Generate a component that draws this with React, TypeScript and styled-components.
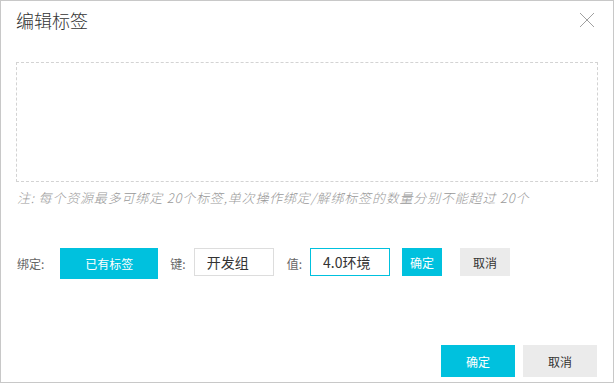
import React from 'react'
import styled, { createGlobalStyle } from 'styled-components'

const GlobalStyle = createGlobalStyle`
  html, body {
    margin: 0;
    padding: 0;
    background: #ffffff;
  }
  body {
    font-family: "Noto Sans CJK SC", "Liberation Sans", sans-serif;
  }
  * {
    box-sizing: border-box;
  }
`

const Dialog = styled.div`
  width: 614px;
  height: 383px;
  border: 1px solid #c8c8c8;
  background: #fff;
  display: flex;
  flex-direction: column;
  color: #333;
`

const Header = styled.div`
  height: 37px;
  padding: 0 15px;
  display: flex;
  align-items: center;
  justify-content: space-between;
`

const Title = styled.h3`
  margin: 0;
  font-size: 18px;
  font-weight: 300;
  color: #333;
  line-height: 24px;
`

const CloseButton = styled.button`
  width: 16px;
  height: 16px;
  margin-right: 3px;
  padding: 0;
  border: 0;
  background: none;
  display: flex;
  align-items: center;
  justify-content: center;
  cursor: pointer;
`

const Body = styled.div`
  padding: 24px 15px 0;
  display: flex;
  flex-direction: column;
`

const TagArea = styled.div`
  height: 120px;
  border: 1px dashed #d3d3d3;
`

const Note = styled.p`
  margin: 7px 0 0 1px;
  font-size: 13px;
  letter-spacing: 0.82px;
  line-height: 17px;
  font-style: italic;
  font-weight: 300;
  color: #999;
`

const BindRow = styled.div`
  margin-top: 42px;
  display: flex;
  align-items: center;
  height: 31px;
`

const Label = styled.span<{ $before?: number; $after: number }>`
  font-size: 12px;
  color: #666;
  margin-left: ${p => p.$before ?? 1}px;
  margin-right: ${p => p.$after}px;
`

const Button = styled.button<{ $primary?: boolean; $w: number; $h: number; $before?: number }>`
  width: ${p => p.$w}px;
  height: ${p => p.$h}px;
  margin-left: ${p => p.$before ?? 0}px;
  border: 0;
  padding: 0;
  font-family: inherit;
  font-size: 12px;
  cursor: pointer;
  background: ${p => (p.$primary ? '#00c1de' : '#ebebeb')};
  color: ${p => (p.$primary ? '#fff' : '#333')};
`

const SmallButton = styled(Button)`
  align-self: flex-start;
`

const Input = styled.input<{ $focused?: boolean }>`
  width: 80px;
  height: 28px;
  padding: 0 12px;
  border: 1px solid ${p => (p.$focused ? '#00c1de' : '#dddddd')};
  outline: none;
  font-family: inherit;
  font-size: 14px;
  color: #333;
  background: #fff;
  align-self: flex-start;
`

const Footer = styled.div`
  margin-top: auto;
  padding: 0 16px 5px;
  display: flex;
  justify-content: flex-end;
  gap: 8px;
`

const CloseIcon = () => (
  <svg width="16" height="16" viewBox="0 0 16 16">
    <path d="M1 1 L15 15 M15 1 L1 15" stroke="#a0a0a0" strokeWidth="1" fill="none" />
  </svg>
)

export default function App() {
  return (
    <>
      <GlobalStyle />
      <Dialog>
        <Header>
          <Title>编辑标签</Title>
          <CloseButton aria-label="关闭">
            <CloseIcon />
          </CloseButton>
        </Header>
        <Body>
          <TagArea />
          <Note>注: 每个资源最多可绑定 20个标签,单次操作绑定/解绑标签的数量分别不能超过 20个</Note>
          <BindRow>
            <Label $after={16}>绑定:</Label>
            <Button $primary $w={98} $h={31}>已有标签</Button>
            <Label $before={12} $after={8}>键:</Label>
            <Input defaultValue="开发组" />
            <Label $before={13} $after={8}>值:</Label>
            <Input $focused defaultValue="4.0环境" />
            <SmallButton $primary $w={40} $h={28} $before={12}>确定</SmallButton>
            <SmallButton $w={50} $h={28} $before={18}>取消</SmallButton>
          </BindRow>
        </Body>
        <Footer>
          <Button $primary $w={74} $h={32}>确定</Button>
          <Button $w={74} $h={32}>取消</Button>
        </Footer>
      </Dialog>
    </>
  )
}
